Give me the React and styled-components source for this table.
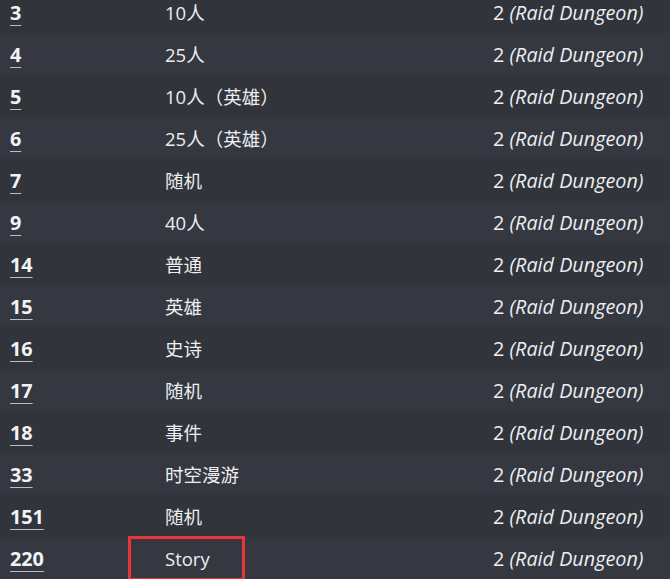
import { createGlobalStyle, styled } from "styled-components";

const GlobalStyle = createGlobalStyle`
  html, body {
    margin: 0;
    padding: 0;
    background: #31343b;
    overflow: hidden;
  }
`;

const Table = styled.div`
  /* first row is cut off by the top of the window */
  margin-top: -9px;
  width: 670px;
  font-family: "Open Sans", "Noto Sans CJK SC", sans-serif;
  font-size: 19.8px;
  color: #eceef0;
`;

const Row = styled.div`
  display: grid;
  grid-template-columns: 165px 328px 1fr;
  align-items: center;
  height: 42px;
  background: ${(props) => (props.$alt ? "#353840" : "#31343b")};
`;

const IdCell = styled.div`
  padding-left: 10px;
`;

const IdLink = styled.a`
  font-weight: 700;
  color: #f2f3f5;
  text-decoration: underline;
  text-decoration-color: #b9bcc2;
  text-underline-offset: 5px;
  text-decoration-thickness: 1px;
`;

const NameCell = styled.div`
  position: relative;
  align-self: stretch;
  display: flex;
  align-items: center;
  font-size: 18.5px;

  /* red annotation box drawn over the cell */
  ${(props) =>
    props.$marked &&
    `
    &::after {
      content: "";
      position: absolute;
      left: -37px;
      top: -1px;
      width: 111px;
      height: 39px;
      border: 3px solid #e8353a;
    }
  `}
`;

const TypeCell = styled.div`
  white-space: nowrap;
`;

const TypeName = styled.i``;

const rows = [
  [3, "10人"],
  [4, "25人"],
  [5, "10人（英雄）"],
  [6, "25人（英雄）"],
  [7, "随机"],
  [9, "40人"],
  [14, "普通"],
  [15, "英雄"],
  [16, "史诗"],
  [17, "随机"],
  [18, "事件"],
  [33, "时空漫游"],
  [151, "随机"],
  [220, "Story"],
];

export default function App() {
  return (
    <>
      <GlobalStyle />
      <Table>
        {rows.map(([id, name], i) => (
          <Row key={id} $alt={i % 2 === 1}>
            <IdCell>
              <IdLink>{id}</IdLink>
            </IdCell>
            <NameCell $marked={id === 220}>{name}</NameCell>
            <TypeCell>
              2 <TypeName>(Raid Dungeon)</TypeName>
            </TypeCell>
          </Row>
        ))}
      </Table>
    </>
  );
}
